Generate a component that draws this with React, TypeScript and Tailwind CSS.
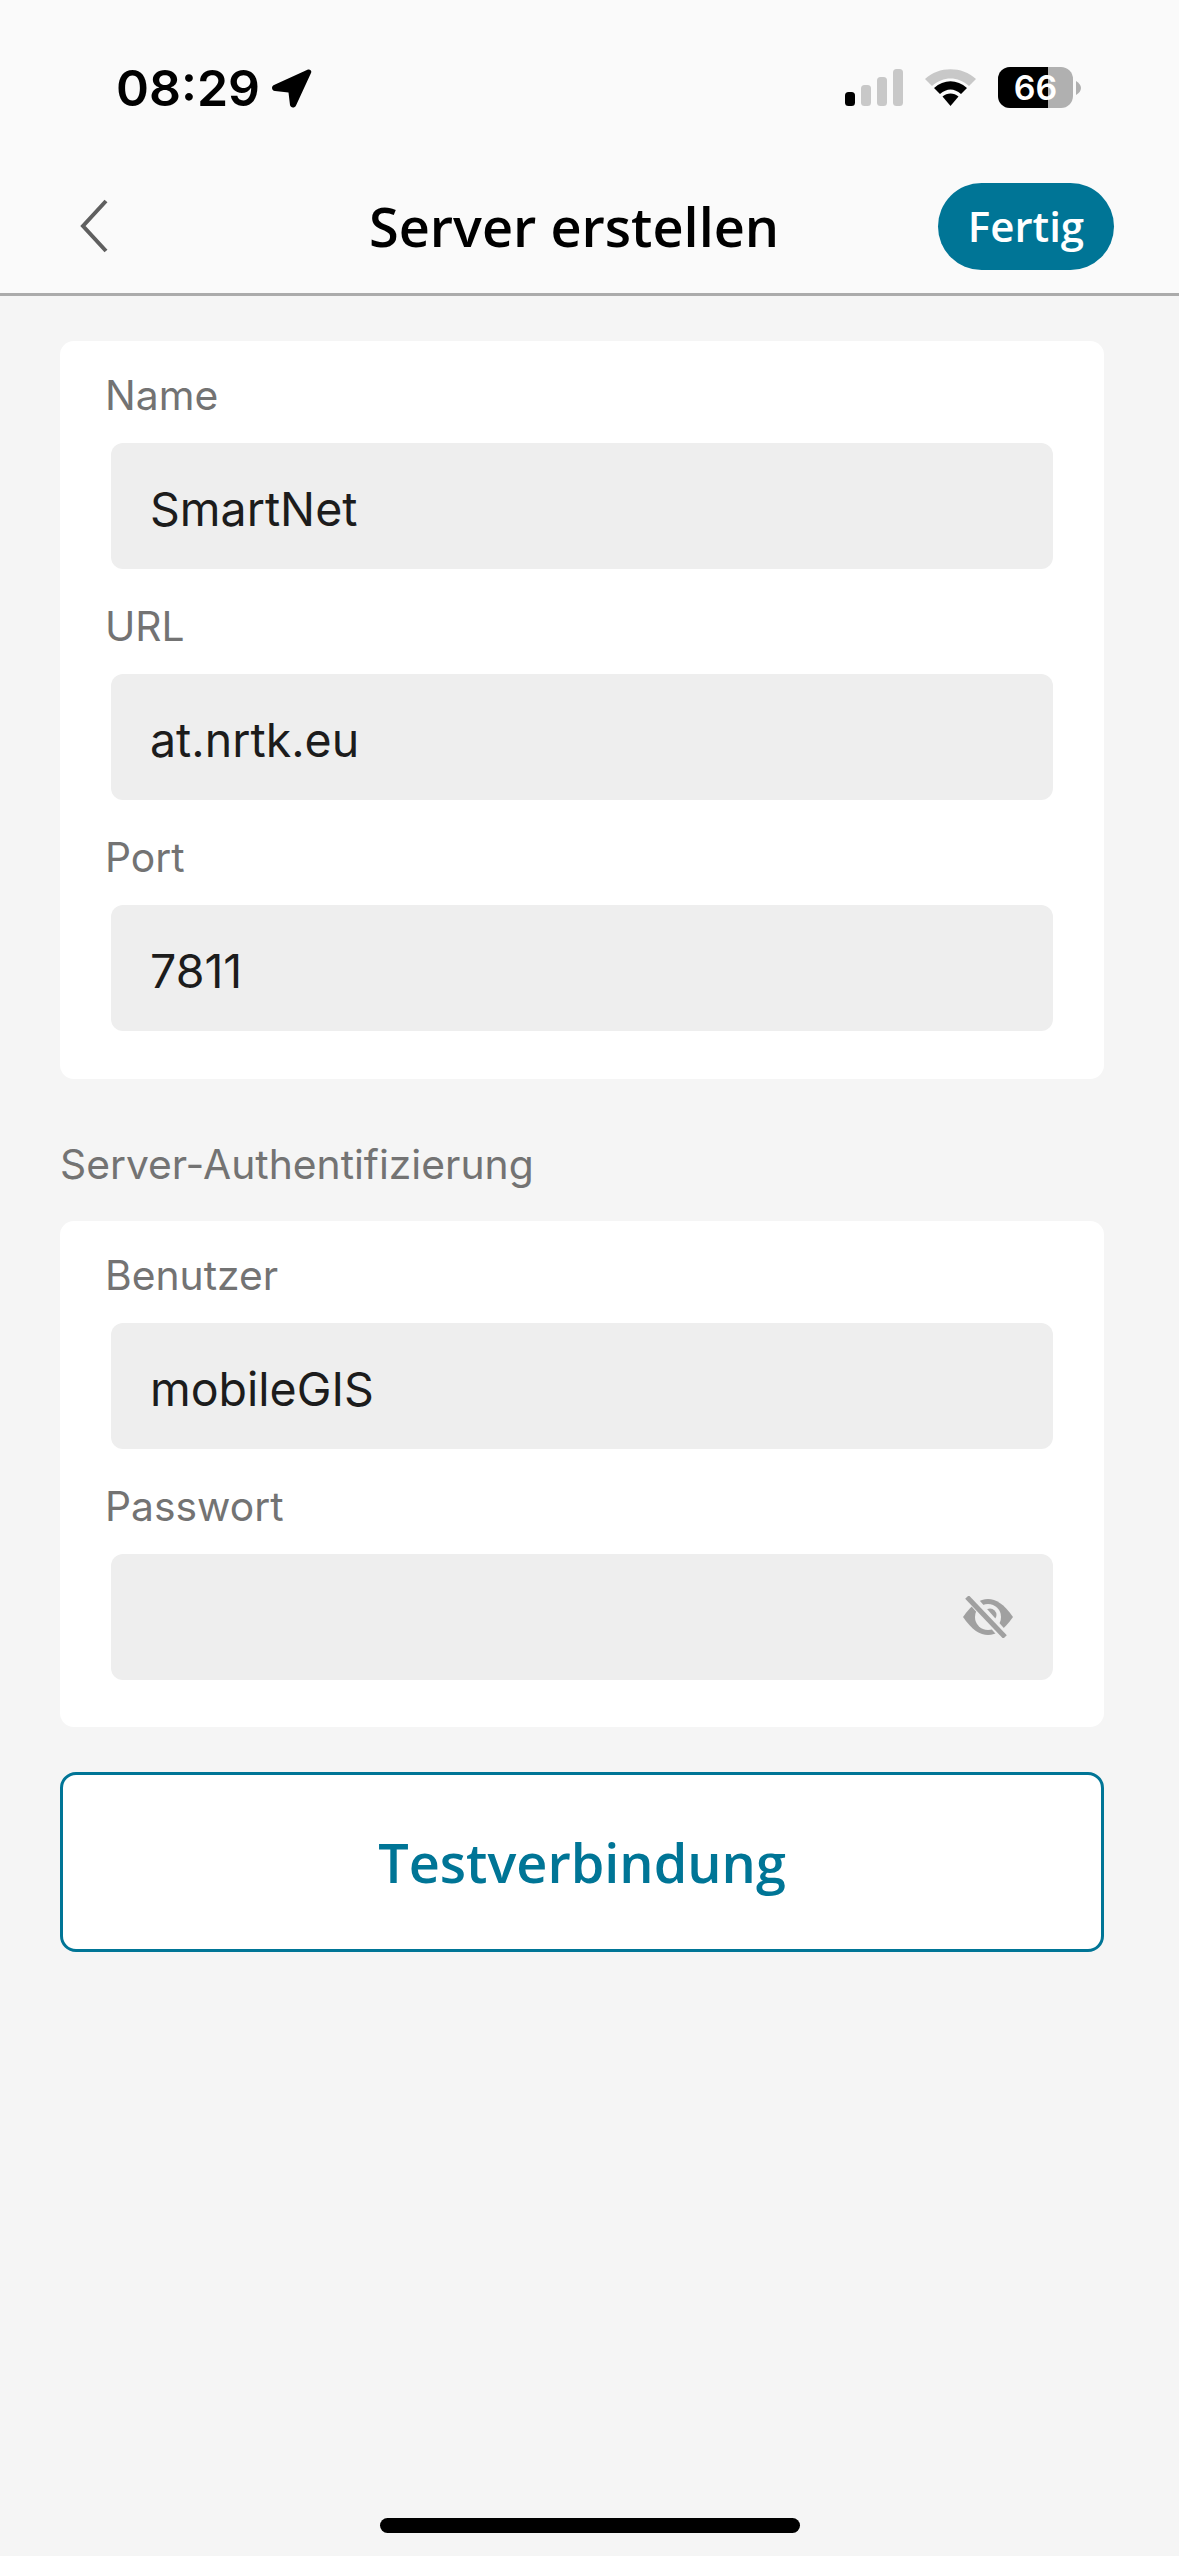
const inter = "font-['Inter',sans-serif]";

function Field({ label, value, children }: { label: string; value?: string; children?: React.ReactNode }) {
  return (
    <div className="mt-[33px] first:mt-[30px]">
      <div className="mb-[24px] ml-[45px] text-[40.8px] leading-[48px] text-[#737373]">{label}</div>
      <div className="mx-[51px] flex h-[126px] items-center justify-between rounded-[12px] bg-[#eeeeee] pl-[39px] pr-[40px] pt-[8px] text-[46.5px] text-[#1c1c1c]">
        <span>{value}</span>
        {children}
      </div>
    </div>
  );
}

function StatusIcons() {
  return (
    <div className="flex items-center">
      <svg width="58" height="38" viewBox="0 0 58 38">
        <rect x="0" y="23" width="10" height="14" rx="3.5" fill="#000" />
        <rect x="16" y="16" width="10" height="21" rx="3.5" fill="#c8c8c8" />
        <rect x="32" y="8" width="10" height="29" rx="3.5" fill="#c8c8c8" />
        <rect x="48" y="0" width="10" height="37" rx="3.5" fill="#c8c8c8" />
      </svg>
      <svg className="ml-[22px]" width="51" height="38" viewBox="0 0 51 38">
        <path d="M0 10 C14 -3 37 -3 51 10 L44 17 C33 7 18 7 7 17 Z" fill="#c8c8c8" />
        <path d="M9 19 C19 10 32 10 42 19 L36 25 C29 19 22 19 15 25 Z" fill="#000" />
        <path d="M17.5 27.5 C22 23.5 29 23.5 33.5 27.5 L25.500 37 Z" fill="#000" />
      </svg>
      <div className="relative ml-[22px] h-[41px] w-[75px] overflow-hidden rounded-[12px] bg-[#b0b0b0]">
        <div className="absolute inset-y-0 left-0 w-[50px] bg-black" />
        <div className="absolute inset-0 flex items-center justify-center text-[34px] font-semibold leading-none text-white">66</div>
      </div>
      <svg className="ml-[3px]" width="5" height="14" viewBox="0 0 5 14">
        <path d="M0 0 C3 2 5 4 5 7 C5 10 3 12 0 14 Z" fill="#b0b0b0" />
      </svg>
    </div>
  );
}

export default function App() {
  return (
    <div className={`${inter} flex h-[2556px] w-[1179px] flex-col overflow-hidden bg-[#f5f5f5]`}>
      {/* Header */}
      <header className="h-[296px] shrink-0 border-b-[3px] border-[#ababab] bg-[#fafafa]">
        <div className="flex h-[183px] items-start justify-between pl-[116px] pr-[98px] pt-[67px]">
          <div className="flex items-center">
            <span className="text-[50px] font-semibold leading-[42px] text-black">08:29</span>
            <svg className="ml-[12px]" width="40" height="39" viewBox="0 0 40 39">
              <path d="M36 0.500 C38.500 0 40 2 39 4 L24 36.500 C22.500 39.500 18.500 39 18 36 L16.500 23.500 L3 22 C-0.500 21.500 -1 17.500 2 16 Z" fill="#000" />
            </svg>
          </div>
          <StatusIcons />
        </div>
        <nav className="flex h-[87px] items-center pl-[80px] pr-[65px] font-['Open_Sans',sans-serif]">
          <svg className="-mt-[2px]" width="28" height="54" viewBox="0 0 28 54" fill="none">
            <path d="M26 2 L3 27 L26 52" stroke="#5f5f5f" strokeWidth="4" />
          </svg>
          <h1 className="-mt-[2px] ml-[261px] text-[54px] font-semibold leading-none text-black">Server erstellen</h1>
          <button className="ml-auto h-[87px] w-[176px] rounded-[44px] bg-[#007596] pb-[2px] text-[42px] font-semibold text-white">Fertig</button>
        </nav>
      </header>

      <main className="ml-[60px] mr-[75px] flex flex-col pt-[45px]">
        <section className="rounded-[14px] bg-white pb-[48px]">
          <Field label="Name" value="SmartNet" />
          <Field label="URL" value="at.nrtk.eu" />
          <Field label="Port" value="7811" />
        </section>

        <div className="mb-[33px] mt-[61px] text-[40.8px] leading-[48px] text-[#737373]">Server-Authentifizierung</div>

        <section className="rounded-[14px] bg-white pb-[47px]">
          <Field label="Benutzer" value="mobileGIS" />
          <Field label="Passwort">
            <svg className="-mt-[8px]" width="50" height="42" viewBox="0 0 50 42">
              <path d="M0 21 C9 8 17 3 25 3 C33 3 41 8 50 21 C41 34 33 39 25 39 C17 39 9 34 0 21 Z" fill="#a0a0a0" />
              <circle cx="25" cy="21" r="13" fill="#eeeeee" />
              <circle cx="27" cy="19" r="6.500" fill="#a0a0a0" />
              <path d="M5 -1 L43 42" stroke="#eeeeee" strokeWidth="10" />
              <path d="M4 1 L42 41" stroke="#a0a0a0" strokeWidth="5" />
            </svg>
          </Field>
        </section>

        <button className="mt-[45px] h-[180px] rounded-[16px] border-[3px] border-[#007596] bg-white font-['Open_Sans',sans-serif] text-[54px] font-semibold text-[#007596]">
          Testverbindung
        </button>
      </main>

      <div className="mb-[23px] mt-auto h-[15px] w-[420px] self-center rounded-full bg-black" />
    </div>
  );
}
